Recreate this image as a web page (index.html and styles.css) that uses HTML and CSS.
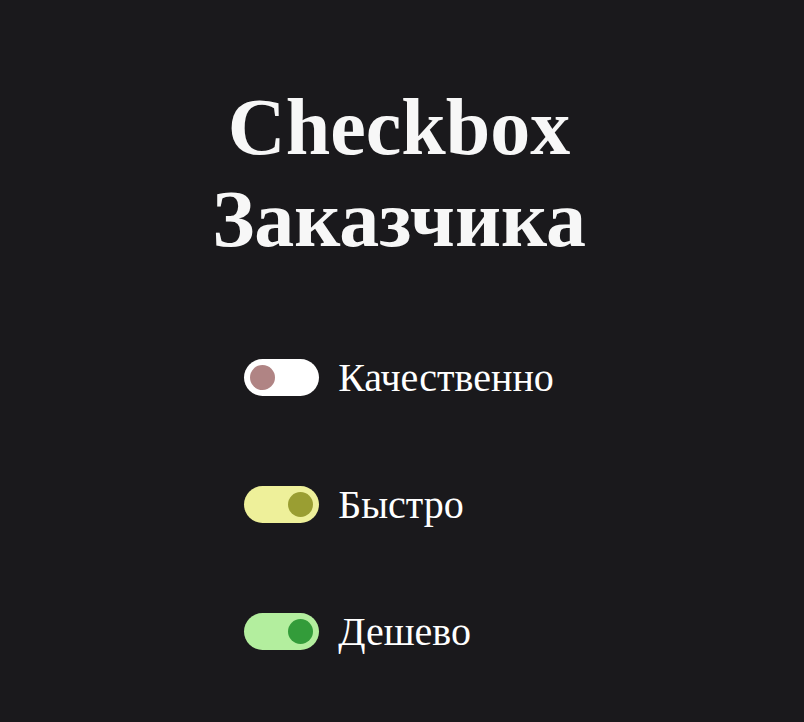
FILE: index.html
```html
<!DOCTYPE html>
<html lang="ru">
<head>
<meta charset="utf-8">
<title>Checkbox Заказчика</title>
<link rel="stylesheet" href="styles.css">
</head>
<body>
<main class="page">
  <h1 class="title">Checkbox<br>Заказчика</h1>
  <div class="options">
    <label class="option">
      <input type="checkbox" class="input">
      <span class="switch switch-quality"><span class="knob"></span></span>
      <span class="label">Качественно</span>
    </label>
    <label class="option">
      <input type="checkbox" class="input" checked>
      <span class="switch switch-fast on"><span class="knob"></span></span>
      <span class="label">Быстро</span>
    </label>
    <label class="option">
      <input type="checkbox" class="input" checked>
      <span class="switch switch-cheap on"><span class="knob"></span></span>
      <span class="label">Дешево</span>
    </label>
  </div>
</main>
</body>
</html>
```
FILE: styles.css
```css
html, body {
  margin: 0;
  padding: 0;
  background: #1a191c;
  height: 100%;
}
.page {
  display: flex;
  flex-direction: column;
  align-items: center;
  padding: 81px 6px 0 0;
  font-family: "Liberation Serif", "Times New Roman", serif;
  color: #ffffff;
}
.title {
  margin: 0 0 94px;
  font-size: 80px;
  line-height: 92px;
  font-weight: bold;
  text-align: center;
  color: #f7f7f7;
}
.options {
  display: flex;
  flex-direction: column;
  align-items: flex-start;
  gap: 90px;
}
.option {
  display: flex;
  align-items: center;
  gap: 19px;
  cursor: pointer;
}
.input {
  display: none;
}
.switch {
  display: flex;
  align-items: center;
  width: 75px;
  height: 37px;
  border-radius: 19px;
  padding: 0 6px;
  box-sizing: border-box;
  background: #ffffff;
}
.switch.on {
  justify-content: flex-end;
}
.knob {
  width: 25px;
  height: 25px;
  border-radius: 50%;
}
.switch-quality .knob { background: #b08484; }
.switch-fast { background: #eef09a; }
.switch-fast .knob { background: #9a9e32; }
.switch-cheap { background: #b3ee9e; }
.switch-cheap .knob { background: #339c3a; }
.label {
  font-size: 40px;
  line-height: 37px;
  color: #ffffff;
}
```
